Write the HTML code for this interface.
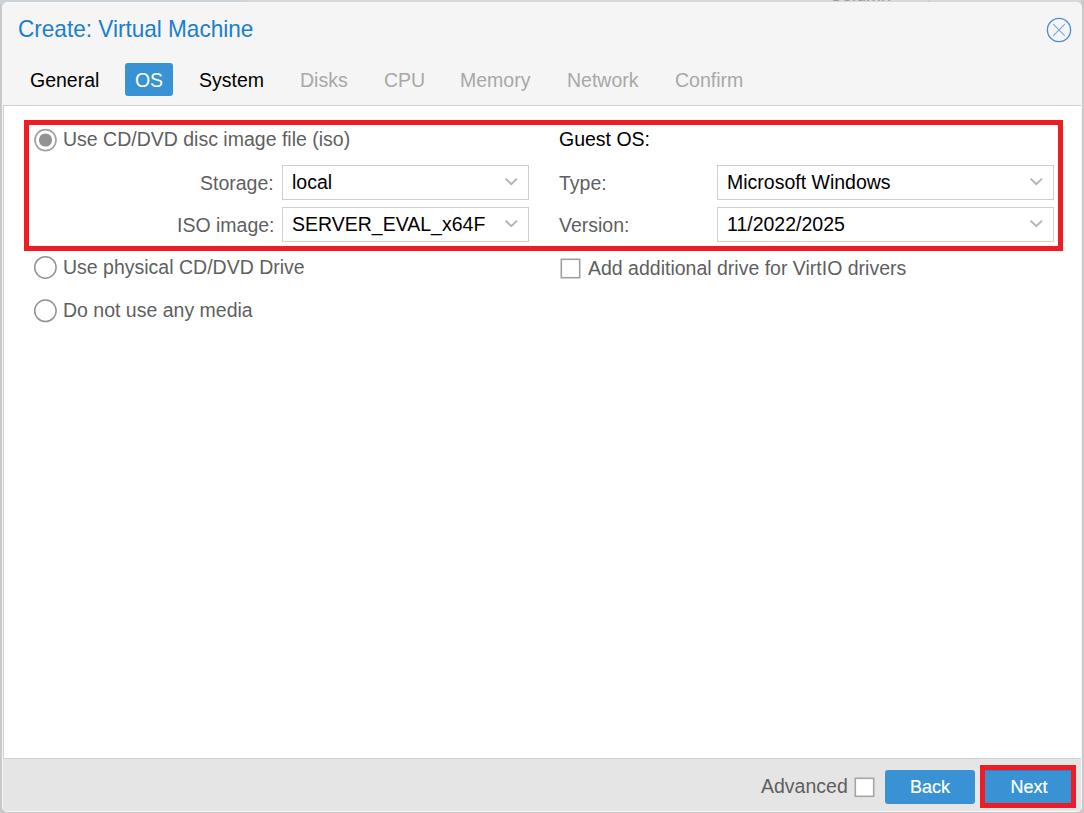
<!DOCTYPE html>
<html><head><meta charset="utf-8">
<style>
*{margin:0;padding:0;box-sizing:border-box}
html,body{width:1084px;height:813px;overflow:hidden;background:#c9c9c9;font-family:"Liberation Sans",sans-serif;}
.abs{position:absolute}
#bgtop{position:absolute;left:0;top:0;width:1084px;height:4px;background:linear-gradient(90deg,#cbd2d8 0,#cbd2d8 240px,#d3d3d3 240px,#d3d3d3 248px,#d8d8d8 248px)}
#bgright{position:absolute;right:0;top:0;width:3px;height:813px;background:#c9c9c9}
#dlg{position:absolute;left:2px;top:2px;width:1080px;height:810px;background:#f5f5f5;border-radius:5px;overflow:hidden;border:1px solid #f7f7f7}
#title{position:absolute;left:15px;top:12px;font-size:24px;color:#1a7fcc;white-space:nowrap;transform:scaleX(0.94);transform-origin:0 0}
#close{position:absolute;left:1043px;top:14px}
.tab{position:absolute;top:66px;font-size:19.5px;color:#000;white-space:nowrap}
.tab.dis{color:#a8a8a8}
#ostab{position:absolute;left:122px;top:60px;width:48px;height:33px;background:#3892d4;border-radius:3px;color:#fff;font-size:19.5px;text-align:center;line-height:34px}
#body{position:absolute;left:0;top:102px;width:1080px;height:654px;background:#fff;border-top:1px solid #cfcfcf;border-bottom:1px solid #cfcfcf;border-left:1px solid #d2d2d2}
#foot{position:absolute;left:0;top:756px;width:1080px;height:53px;background:#e5e5e5}
.lbl{position:absolute;font-size:19.5px;color:#5f5f5f;white-space:nowrap}
.blk{color:#000}
.combo{position:absolute;height:35px;border:1px solid #cfcfcf;background:#fff}
.combo span{position:absolute;left:9px;top:5px;font-size:19.5px;color:#000;white-space:nowrap}
.combo svg{position:absolute;right:10px;top:11px}
.radio{position:absolute;width:23px;height:23px;border:2px solid #a2a2a2;border-radius:50%;background:#fff}
.radio.on::after{content:"";position:absolute;left:3px;top:3px;width:13px;height:13px;border-radius:50%;background:#939393}
.red{position:absolute;border:5px solid #ee1c25}
.btn{position:absolute;background:#3892d4;border-radius:3px;color:#fff;font-size:18px;text-align:center;line-height:35px;-webkit-text-stroke:0.2px #fff}
</style></head><body>
<div id="bgtop"></div><div id="bgright"></div>
<div class="abs" style="left:829px;top:-15px;font-size:18px;color:#9a9a9a;white-space:nowrap">Column</div>
<div class="abs" style="left:929px;top:0;width:1px;height:3px;background:#c4c4c4"></div>
<div id="dlg">
  <div id="title">Create: Virtual Machine</div>
  <svg id="close" width="26" height="26" viewBox="0 0 26 26"><circle cx="13" cy="13" r="11.6" fill="none" stroke="#4b8dcd" stroke-width="1.35"/><path d="M7.2 7.2L18.8 18.8M18.8 7.2L7.2 18.8" stroke="#74a8dd" stroke-width="1.05"/></svg>
  <div class="tab" style="left:27px">General</div>
  <div id="ostab">OS</div>
  <div class="tab" style="left:196px">System</div>
  <div class="tab dis" style="left:297px">Disks</div>
  <div class="tab dis" style="left:381px">CPU</div>
  <div class="tab dis" style="left:457px">Memory</div>
  <div class="tab dis" style="left:564px">Network</div>
  <div class="tab dis" style="left:672px">Confirm</div>
  <div id="body"></div>
  <div id="foot"></div>
</div>
<!-- body content in page coords -->
<svg class="abs" style="left:33px;top:128px" width="25" height="25" viewBox="0 0 25 25"><circle cx="12.5" cy="12.1" r="10.5" fill="#fff" stroke="#a3a3a3" stroke-width="1.7"/><circle cx="12.5" cy="12" r="6.6" fill="#939393"/></svg>
<div class="lbl" style="left:63px;top:128px">Use CD/DVD disc image file (iso)</div>
<div class="lbl" style="left:200px;top:172px">Storage:</div>
<div class="lbl" style="left:177px;top:214px">ISO image:</div>
<div class="combo" style="left:282px;top:165px;width:247px"><span>local</span><svg width="14" height="9" viewBox="0 0 14 9"><path d="M1.6 1.6L7.3 7.1L13 1.6" fill="none" stroke="#b5b5b5" stroke-width="2"/></svg></div>
<div class="combo" style="left:282px;top:207px;width:247px"><span>SERVER_EVAL_x64F</span><svg width="14" height="9" viewBox="0 0 14 9"><path d="M1.6 1.6L7.3 7.1L13 1.6" fill="none" stroke="#b5b5b5" stroke-width="2"/></svg></div>
<div class="lbl blk" style="left:559px;top:128px">Guest OS:</div>
<div class="lbl" style="left:559px;top:172px">Type:</div>
<div class="lbl" style="left:559px;top:214px">Version:</div>
<div class="combo" style="left:717px;top:165px;width:337px"><span>Microsoft Windows</span><svg width="14" height="9" viewBox="0 0 14 9"><path d="M1.6 1.6L7.3 7.1L13 1.6" fill="none" stroke="#b5b5b5" stroke-width="2"/></svg></div>
<div class="combo" style="left:717px;top:207px;width:337px"><span>11/2022/2025</span><svg width="14" height="9" viewBox="0 0 14 9"><path d="M1.6 1.6L7.3 7.1L13 1.6" fill="none" stroke="#b5b5b5" stroke-width="2"/></svg></div>
<div class="red" style="left:24px;top:120px;width:1039px;height:131px"></div>
<svg class="abs" style="left:33px;top:255px" width="25" height="25" viewBox="0 0 25 25"><circle cx="12.4" cy="12.45" r="10.7" fill="#fff" stroke="#939393" stroke-width="1.5"/></svg>
<div class="lbl" style="left:63px;top:256px">Use physical CD/DVD Drive</div>
<svg class="abs" style="left:33px;top:298px" width="25" height="25" viewBox="0 0 25 25"><circle cx="12.4" cy="12.8" r="10.7" fill="#fff" stroke="#939393" stroke-width="1.5"/></svg>
<div class="lbl" style="left:63px;top:299px">Do not use any media</div>
<svg class="abs" style="left:560px;top:258px" width="21" height="21" viewBox="0 0 21 21"><rect x="1.3" y="1.3" width="18.4" height="18.4" fill="#fff" stroke="#a0a0a0" stroke-width="1.6"/></svg>
<div class="lbl" style="left:588px;top:257px">Add additional drive for VirtIO drivers</div>
<div class="lbl" style="left:761px;top:775px">Advanced</div>
<svg class="abs" style="left:854px;top:777px" width="21" height="21" viewBox="0 0 21 21"><rect x="1.3" y="1.3" width="18.4" height="18" fill="#fff" stroke="#a6a6a6" stroke-width="1.6"/></svg>
<div class="btn" style="left:885px;top:770px;width:90px;height:34px">Back</div>
<div class="btn" style="left:985px;top:770px;width:86px;height:33px;border-radius:0;padding-left:2px;box-shadow:inset 0 1px 0 #2a84cc">Next</div>
<div class="red" style="left:980px;top:765px;width:96px;height:43px"></div>
</body></html>
